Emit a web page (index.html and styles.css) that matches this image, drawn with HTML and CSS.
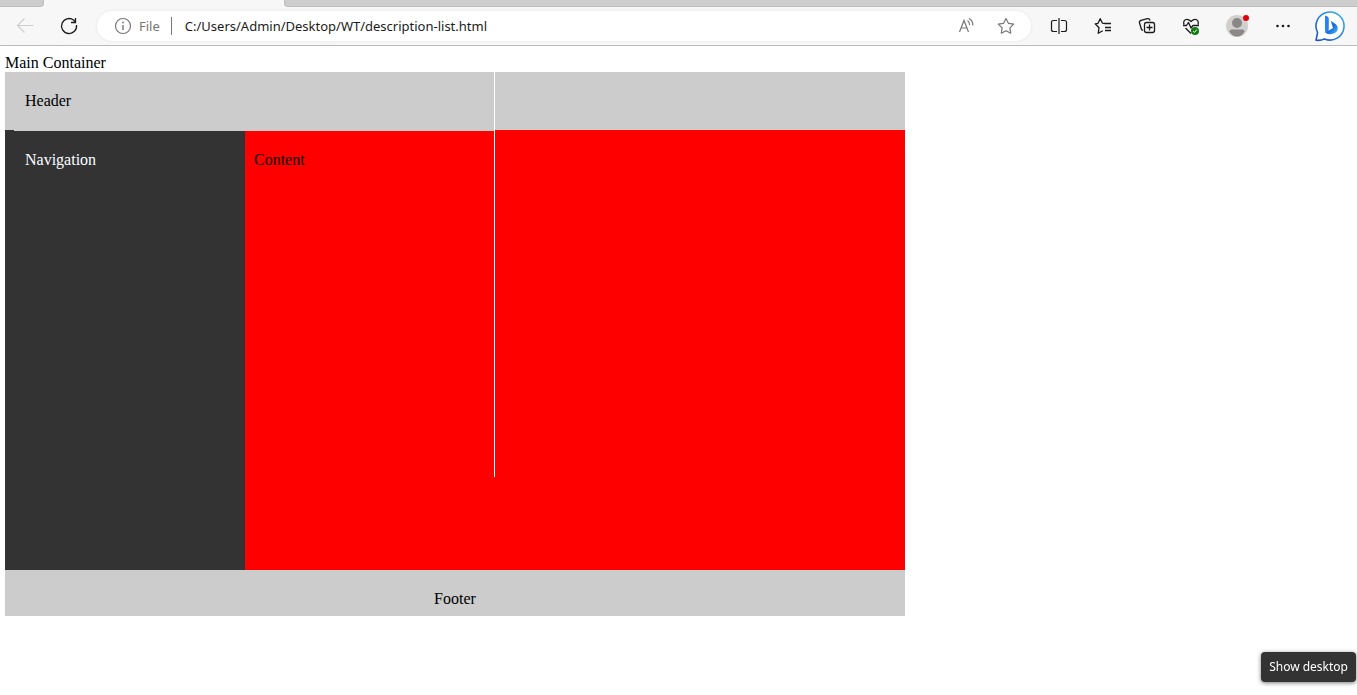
FILE: index.html
```html
<!DOCTYPE html>
<html lang="en">
<head>
<meta charset="utf-8">
<title>description-list.html</title>
<link rel="stylesheet" href="styles.css">
</head>
<body>
<div class="browser">
  <div class="tabs"><div class="tab tab-before"></div><div class="tab tab-active"></div><div class="tab tab-after"></div></div>
  <div class="toolbar">
    <div class="group">
      <button class="tool" type="button" aria-label="Back" disabled>
        <svg width="32" height="32" viewBox="0 0 32 32" fill="none" stroke="#cfcfcf" stroke-width="1.2"><path d="M24.500 15.500H8.500M15.500 8.500L8.500 15.500L15.500 22.500"/></svg>
      </button>
      <button class="tool" type="button" aria-label="Refresh">
        <svg width="32" height="32" viewBox="0 0 32 32" fill="none" stroke="#1b1b1b" stroke-width="1.3"><path d="M23.500 15A7.500 7.500 0 1 1 20.500 10L22.500 12M22.500 8V12.500H18"/></svg>
      </button>
    </div>
    <div class="address">
      <button class="site" type="button">
        <svg width="18" height="18" viewBox="0 0 18 18" fill="none" stroke="#767676" stroke-width="1.2"><circle cx="9" cy="9" r="7.500"/><path d="M9 8V13" stroke-width="1.400"/><circle cx="9" cy="5.500" r=".9" fill="#767676" stroke="none"/></svg>
        <span>File</span>
      </button>
      <input class="url" type="text" aria-label="Address" value="C:/Users/Admin/Desktop/WT/description-list.html">
      <button class="tool" type="button" aria-label="Read aloud">
        <svg width="32" height="32" viewBox="0 0 32 32" fill="none" stroke="#767676" stroke-width="1.2"><path d="M9.500 22L14 10.500L18.500 22M11 18H17M17.500 10.500C19 11.500 19.600 13 19.600 15M19 8.500C21.800 10 23 12.500 22.800 15.500"/></svg>
      </button>
      <button class="tool" type="button" aria-label="Add to favorites">
        <svg width="32" height="32" viewBox="0 0 32 32" fill="none" stroke="#767676" stroke-width="1.200" stroke-linejoin="round"><path d="M16 8.500L18.400 13.300L23.700 14.100L19.900 17.900L20.700 23.200L16 20.700L11.300 23.200L12.100 17.900L8.300 14.100L13.600 13.300Z"/></svg>
      </button>
    </div>
    <div class="group">
      <button class="tool" type="button" aria-label="Split screen">
        <svg width="32" height="32" viewBox="0 0 32 32" fill="none" stroke="#1b1b1b" stroke-width="1.200"><path d="M14 10.500H10.500Q8.500 10.500 8.500 12.500V19.500Q8.500 21.500 10.500 21.500H14M18 10.500H21.500Q23.500 10.500 23.500 12.500V19.500Q23.500 21.500 21.500 21.500H18M16 8V24"/></svg>
      </button>
      <button class="tool" type="button" aria-label="Favorites">
        <svg width="32" height="32" viewBox="0 0 32 32" fill="none" stroke="#1b1b1b" stroke-width="1.300" stroke-linejoin="round"><path d="M18 13.500L15.500 13.200L13.200 8.700L11 13.300L8.200 13.800L12 17.700L11.200 23.300L15.800 20.800M17 13.500H24M18 17.500H24M18 20.500H24"/></svg>
      </button>
      <button class="tool" type="button" aria-label="Collections">
        <svg width="32" height="32" viewBox="0 0 32 32" fill="none" stroke="#1b1b1b" stroke-width="1.300"><path d="M12 20.500L10.500 19.500L8.500 13Q8 11 10 10.300L16.500 8.600Q18.500 8.300 19 10.500"/><rect x="13.500" y="12.500" width="10" height="10" rx="2"/><path d="M18.500 14.500V20.500M15.500 17.500H21.500"/></svg>
      </button>
      <button class="tool" type="button" aria-label="Browser essentials">
        <svg width="32" height="32" viewBox="0 0 32 32" fill="none" stroke="#1b1b1b" stroke-width="1.300" stroke-linejoin="round"><path d="M9 14.500C8 11.500 9.500 9.300 12 9.300C14 9.300 15 10.500 16 11.500C17 10.500 18 9.300 20 9.300C22.500 9.300 24 11.500 23 14.500M8 15.500H11.500L13.500 12.500L16 18L18 15.500H24M10.500 18L16 23.500"/><circle cx="20" cy="21" r="4" fill="#107c10" stroke="none"/><path d="M18.200 21.300L19.500 22.400L21.800 19.600" stroke="#fff" stroke-width="1"/></svg>
      </button>
    </div>
    <div class="group group-wide">
      <button class="tool" type="button" aria-label="Profile">
        <svg width="32" height="32" viewBox="0 0 32 32"><circle cx="16" cy="16" r="11" fill="#d2d0ce"/><circle cx="16" cy="13" r="5" fill="#8a8886"/><path d="M8.500 21.500Q8.500 19.500 10.500 19.500H21.500Q23.500 19.500 23.500 21.500Q21 26.500 16 26.500Q11 26.500 8.500 21.500Z" fill="#8a8886"/><circle cx="25" cy="8" r="3" fill="#e3000b"/></svg>
      </button>
      <button class="tool" type="button" aria-label="Settings and more">
        <svg width="32" height="32" viewBox="0 0 32 32" fill="#1b1b1b"><circle cx="10.500" cy="16" r="1.300"/><circle cx="16" cy="16" r="1.300"/><circle cx="21.500" cy="16" r="1.300"/></svg>
      </button>
      <button class="tool" type="button" aria-label="Bing">
        <svg width="32" height="32" viewBox="0 0 32 32">
          <defs><linearGradient id="ring" x1="1" y1="0" x2="0" y2="1"><stop offset="0" stop-color="#35b6f2"/><stop offset="1" stop-color="#1c4fc8"/></linearGradient><linearGradient id="mark" x1="0" y1="0" x2="1" y2="1"><stop offset="0" stop-color="#2389f0"/><stop offset=".5" stop-color="#1768df"/><stop offset="1" stop-color="#42c8f5"/></linearGradient></defs>
          <path d="M3 30.300L4.600 22.500A14 14 0 1 1 11.500 28.900Q8 30.800 3 30.300Z" fill="#fff" stroke="url(#ring)" stroke-width="1.600" stroke-linejoin="round"/>
          <path d="M12 5.500Q15.800 6 15.800 9V19Q15.800 22 12.800 23.200Q12 22 12 20Z" fill="#2585ee"/>
          <path d="M17.800 10.800L22.500 14Q25.500 16.500 24.500 20Q23 24 17.500 24.200Q14 24.500 12.500 22.500L15.800 20.500L20 18L18.700 14Z" fill="url(#mark)"/>
        </svg>
      </button>
    </div>
  </div>
</div>
<main class="page">
  <div class="title">Main Container</div>
  <div class="container">
    <header class="header">Header</header>
    <div class="columns">
      <nav class="nav">Navigation</nav>
      <section class="content">Content</section>
    </div>
    <footer class="footer">Footer</footer>
  </div>
</main>
<div class="tooltip" role="tooltip">Show desktop</div>
</body>
</html>
```
FILE: styles.css
```css
* {
  box-sizing: border-box;
}

body {
  margin: 0;
  background: #fff;
  color: #000;
  font: 16px/18px "Liberation Serif", "Times New Roman", serif;
}

/* Browser chrome */
.browser {
  background: #f7f7f7;
  border-bottom: 1px solid #bbb;
  font: 13px/18px "Noto Sans", "Segoe UI", sans-serif;
}

.tabs {
  display: flex;
  height: 7px;
}

.tab {
  background: #cdcdcd;
  border-bottom: 1px solid #bdbdbd;
}

.tab-before {
  width: 44px;
  border-right: 1px solid #bdbdbd;
  border-bottom-right-radius: 4px;
}

.tab-active {
  width: 240px;
  background: #f7f7f7;
  border: 0;
}

.tab-after {
  flex: 1;
  border-left: 1px solid #bdbdbd;
  border-bottom-left-radius: 4px;
}

.toolbar {
  display: flex;
  align-items: center;
  padding: 3px 12px 3px 9px;
}

.group {
  display: flex;
  gap: 12px;
}

.group-wide {
  gap: 14px;
  margin-left: 14px;
}

button {
  padding: 0;
  border: 0;
  background: none;
  font: inherit;
}

.tool {
  flex: none;
  width: 32px;
  height: 32px;
}

.tool svg {
  display: block;
}

.address {
  display: flex;
  flex: 1;
  align-items: center;
  gap: 8px;
  min-width: 0;
  height: 30px;
  margin: 0 12px;
  padding: 0 9px 0 17px;
  border-radius: 15px;
  background: #fff;
  box-shadow: 0 0 3px #e4e4e4;
}

.site {
  display: flex;
  align-items: center;
  gap: 7px;
  padding-right: 11px;
  border-right: 1px solid #767676;
  color: #767676;
}

.url {
  flex: 1;
  min-width: 0;
  padding: 0 0 0 5px;
  border: 0;
  outline: 0;
  background: none;
  color: #1b1b1b;
  font: inherit;
}

/* Document */
.page {
  padding: 8px 5px;
}

.container {
  position: relative;
  max-width: 900px;
}

/* Thin vertical rule over the header and the content */
.container::after {
  content: "";
  position: absolute;
  top: 0;
  left: 489px;
  width: 1px;
  height: 405px;
  background: #fff;
}

.header {
  position: relative;
  padding: 20px;
  background: #ccc;
}

/* Lower lip of the header's left part */
.header::after {
  content: "";
  position: absolute;
  top: 100%;
  left: 9px;
  width: 480px;
  height: 1px;
  background: #ccc;
}

.columns {
  display: flex;
  min-height: 440px;
}

.nav {
  width: 240px;
  padding: 21px 20px;
  background: #333;
  color: #fff;
}

.content {
  flex: 1;
  padding: 21px 9px;
  background: #f00;
}

.footer {
  padding: 20px 20px 8px;
  background: #ccc;
  text-align: center;
}

.tooltip {
  position: fixed;
  right: 1px;
  bottom: 13px;
  padding: 6px 8px;
  border-radius: 4px;
  background: #333;
  box-shadow: 0 1px 4px #777;
  color: #fff;
  font: 12px/18px "Noto Sans", "Segoe UI", sans-serif;
}
```
